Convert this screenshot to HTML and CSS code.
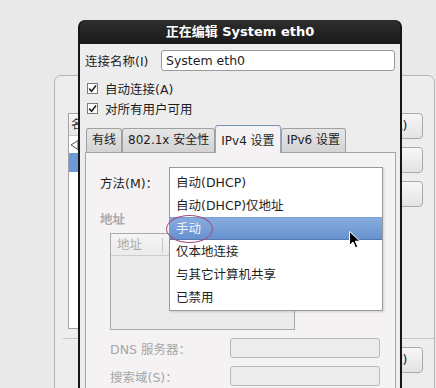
FILE: index.html
```html
<!DOCTYPE html>
<html lang="zh-CN">
<head>
  <meta charset="utf-8">
  <title>正在编辑 System eth0</title>
  <link rel="stylesheet" href="styles.css">
</head>
<body>
  <div class="desk">
    <div class="bgwin">
      <div class="bgwin-main">
        <div class="conn-list">
          <div class="conn-head">名称</div>
          <div class="conn-group">
            <svg class="expander" width="9" height="10" viewBox="0 0 9 10"><polygon points="8,0.5 1,5 8,9.5" fill="none" stroke="#555" stroke-width="1"/></svg>
          </div>
          <div class="conn-row sel"></div>
        </div>
        <div class="bg-buttons">
          <div class="bg-btn">添加(A)</div>
          <div class="bg-btn hidden-label">编辑...</div>
          <div class="bg-btn hidden-label">删除...</div>
        </div>
      </div>
      <div class="bgwin-sep"></div>
      <div class="bgwin-foot">
        <div class="bg-btn">关闭(C)</div>
      </div>
    </div>

    <div class="dialog">
      <div class="titlebar">正在编辑 System eth0</div>
      <div class="dlg-body">
        <div class="name-row">
          <span class="name-label">连接名称(I)</span>
          <input class="entry" type="text" value="System eth0">
        </div>

        <div class="checks">
          <div class="check">
            <span class="box"><svg width="9" height="9" viewBox="0 0 9 9"><path d="M1.2 4.6 L3.6 7.2 L8 1.4" fill="none" stroke="#222" stroke-width="1.6"/></svg></span>
            <span>自动连接(A)</span>
          </div>
          <div class="check">
            <span class="box"><svg width="9" height="9" viewBox="0 0 9 9"><path d="M1.2 4.6 L3.6 7.2 L8 1.4" fill="none" stroke="#222" stroke-width="1.6"/></svg></span>
            <span>对所有用户可用</span>
          </div>
        </div>

        <div class="tabs">
          <div class="tab">有线</div>
          <div class="tab">802.1x 安全性</div>
          <div class="tab active">IPv4 设置</div>
          <div class="tab">IPv6 设置</div>
        </div>

        <div class="tabpanel">
          <div class="method">
            <span>方法(M)：</span>
            <div class="popup">
              <div class="opt">自动(DHCP)</div>
              <div class="opt">自动(DHCP)仅地址</div>
              <div class="opt hl">
                手动
                <span class="ring"></span>
                <svg class="cursor" width="12" height="18" viewBox="0 0 12 18"><path d="M0.5 0.5 L0.5 14.5 L4 11 L6.6 16.8 L8.8 15.8 L6.3 10.2 L11 10.2 Z" fill="#000" stroke="#fff" stroke-width="1"/></svg>
              </div>
              <div class="opt">仅本地连接</div>
              <div class="opt">与其它计算机共享</div>
              <div class="opt">已禁用</div>
            </div>
          </div>

          <div class="section-label">地址</div>
          <div class="addr-table">
            <div class="addr-head"><span class="addr-col">地址</span></div>
          </div>

          <div class="field">
            <span class="field-label">DNS 服务器：</span>
            <span class="entry disabled"></span>
          </div>
          <div class="field">
            <span class="field-label">搜索域(S)：</span>
            <span class="entry disabled"></span>
          </div>
        </div>
      </div>
    </div>
  </div>
</body>
</html>
```

FILE: styles.css
```css
* {
  box-sizing: border-box;
}
body {
  margin: 0;
  width: 436px;
  height: 388px;
  overflow: hidden;
  background: #e9e9e9;
  font-family: "DejaVu Sans", "Noto Sans CJK SC", sans-serif;
  font-size: 12.5px;
  color: #1e1e1e;
}
.desk {
  position: relative;
  width: 436px;
  height: 388px;
  overflow: hidden;
}

/* window behind the dialog */
.bgwin {
  position: absolute;
  left: 54px;
  top: 75px;
  width: 381px;
  height: 340px;
  border: 1px solid #b5b5b5;
  border-radius: 7px;
  background: #ededed;
}
.bgwin-main {
  display: flex;
  justify-content: space-between;
  padding: 37px 11px 0 13px;
}
.conn-list {
  width: 262px;
  height: 216px;
  border: 1px solid #a4a4a4;
  background: #fff;
}
.conn-head {
  height: 22px;
  line-height: 21px;
  padding-left: 2px;
  background: linear-gradient(#f7f7f7, #e6e6e6);
  border-bottom: 1px solid #c9c9c9;
  color: #333;
}
.conn-group {
  height: 17px;
  display: flex;
  align-items: center;
  padding-left: 1px;
}
.conn-row {
  height: 19px;
}
.conn-row.sel {
  background: #6d9ad6;
}
.bg-buttons {
  display: flex;
  flex-direction: column;
  gap: 8px;
  width: 60px;
}
.bg-btn {
  width: 60px;
  height: 26px;
  line-height: 24px;
  border: 1px solid #a9a9a9;
  border-radius: 4px;
  background: linear-gradient(#f7f7f7, #e3e3e3);
  text-align: right;
  padding-right: 19px;
  white-space: nowrap;
  overflow: hidden;
}
.bg-btn.hidden-label {
  padding-right: 24px;
}
.bgwin-sep {
  margin: 9px 0 0 8px;
  border-top: 1px solid #c6c6c6;
}
.bgwin-foot {
  display: flex;
  justify-content: flex-end;
  padding: 8px 11px 0 0;
}

/* dialog */
.dialog {
  position: absolute;
  left: 78px;
  top: 20px;
  width: 324px;
  height: 380px;
  padding: 0 2px;
  background: #161616;
  border-radius: 7px 7px 0 0;
}
.titlebar {
  height: 24px;
  line-height: 24px;
  text-align: center;
  color: #fff;
  font-weight: bold;
  font-size: 13px;
  background: linear-gradient(#2e2e2e, #1a1a1a);
  border-radius: 6px 6px 0 0;
}
.dlg-body {
  height: 356px;
  background: #ededed;
  padding: 6px 5px 0 5px;
}
.name-row {
  display: flex;
  align-items: center;
  height: 21px;
}
.name-label {
  width: 76px;
}
.entry {
  flex: 1;
  height: 21px;
  border: 1px solid #9a9a9a;
  border-radius: 3px;
  background: #fff;
  padding: 0 4px;
  font: inherit;
  color: inherit;
  outline: none;
}
.checks {
  margin-top: 7px;
}
.check {
  display: flex;
  align-items: center;
  gap: 7px;
  height: 20px;
  padding-left: 2px;
}
.box {
  width: 11px;
  height: 11px;
  border: 1px solid #7c7c7c;
  background: #fff;
  display: flex;
  align-items: center;
  justify-content: center;
}

/* tabs */
.tabs {
  display: flex;
  align-items: flex-end;
  height: 27px;
  margin-top: 7px;
  padding-left: 1px;
  position: relative;
  z-index: 1;
  font-size: 12px;
}
.tab {
  height: 24px;
  line-height: 23px;
  padding: 0 5px;
  border: 1px solid #a0a0a0;
  border-bottom: 0;
  border-radius: 3px 3px 0 0;
  background: linear-gradient(#e6e6e6, #d3d3d3);
  white-space: nowrap;
}
.tab.active {
  height: 28px;
  margin-bottom: -1px;
  padding-top: 4px;
  background: #f5f2f4;
  border-color: #9aa5b5;
  border-top-color: #7a92b2;
}
.tabpanel {
  height: 240px;
  margin-right: -1px;
  border: 1px solid #a5a5a5;
  background: #f5f2f4;
  padding: 16px 0 0 14px;
}
.method {
  position: relative;
  display: flex;
  align-items: center;
  height: 26px;
}
.popup {
  position: absolute;
  left: 69px;
  top: -2px;
  width: 214px;
  background: #fff;
  border: 1px solid #9a9a9a;
  padding: 3px 0 1px;
  box-shadow: 1px 1px 2px rgba(0, 0, 0, 0.15);
  z-index: 2;
}
.opt {
  position: relative;
  height: 23px;
  line-height: 23px;
  padding-left: 6px;
  white-space: nowrap;
}
.opt.hl {
  background: linear-gradient(#8aadde, #6590cf);
  color: #f2f6fc;
  box-shadow: inset 0 -1px 0 #5579b3, inset 0 1px 0 #7a9fd4;
}
.ring {
  position: absolute;
  left: -4px;
  top: -2px;
  width: 47px;
  height: 28px;
  border: 1.5px solid #a54b7e;
  border-radius: 50%;
}
.cursor {
  position: absolute;
  left: 179px;
  top: 14px;
}
.section-label {
  margin-top: 17px;
  line-height: 16px;
  font-weight: bold;
  color: #ababab;
}
.addr-table {
  width: 185px;
  height: 97px;
  margin: 5px 0 0 10px;
  border: 1px solid #a9a9a9;
  background: #ebebeb;
}
.addr-head {
  display: flex;
  align-items: center;
  height: 22px;
  background: linear-gradient(#f5f5f5, #eaeaea);
  border-bottom: 1px solid #cdcdcd;
}
.addr-col {
  width: 52px;
  padding-left: 6px;
  line-height: 14px;
  border-right: 1px solid #c6c6c6;
  color: #acacac;
}
.field {
  display: flex;
  align-items: center;
  height: 20px;
  margin: 8px 0 0 10px;
}
.field-label {
  width: 120px;
  color: #a6a6a6;
}
.entry.disabled {
  flex: 0 0 150px;
  height: 20px;
  border-color: #b9b9b9;
  background: #ececec;
}
```
